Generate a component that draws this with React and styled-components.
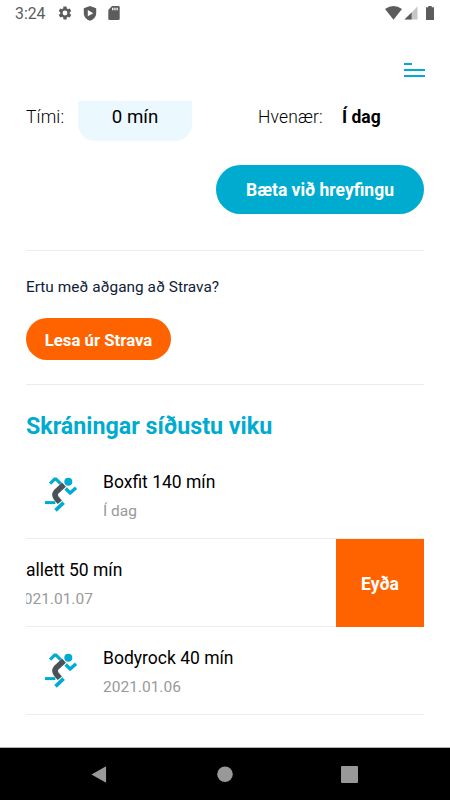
import React, { useState } from 'react';
import styled, { createGlobalStyle, ThemeProvider } from 'styled-components';

const theme = {
  blue: '#00abd0',
  lightBlue: '#ebf8fd',
  orange: '#ff6300',
  line: '#ededed',
  grey: '#999',
  navy: '#0f2137',
};

const GlobalStyle = createGlobalStyle`
  * {
    box-sizing: border-box;
  }

  body {
    margin: 0;
    background: white;
    font-family: Roboto, sans-serif;
    color: black;
  }

  button {
    border: 0;
    padding: 0;
    font-family: inherit;
    cursor: pointer;
  }
`;

const Screen = styled.div`
  display: flex;
  flex-direction: column;
  width: 450px;
  height: 800px;
  overflow: hidden;
`;

const StatusBar = styled.div`
  display: flex;
  justify-content: space-between;
  flex: none;
  height: 26px;
  padding: 0 16px 0 15px;
  color: #5c5c5c;
`;

const StatusGroup = styled.div`
  display: flex;
  align-items: center;

  svg {
    display: block;
  }
`;

const Clock = styled.span`
  width: 42px;
  padding-top: 2px;
  font-size: 15.8px;
  line-height: 24px;
`;

const Header = styled.header`
  display: flex;
  justify-content: flex-end;
  flex: none;
  height: 75px;
  padding: 37px 25px 0 0;
`;

const MenuButton = styled.button`
  display: flex;
  flex-direction: column;
  gap: 4px;
  width: 21px;
  height: 16px;
  background: none;
`;

const MenuLine = styled.span`
  width: ${props => (props.$short ? '8px' : '21px')};
  height: 2px;
  background: ${props => props.theme.blue};
`;

const Content = styled.main`
  flex: 1;
  min-height: 0;
  padding: 0 26px;
  overflow: hidden;
`;

const FormRow = styled.div`
  display: flex;
  height: 40px;
  line-height: 33px;
`;

const Label = styled.span`
  width: ${props => props.$width}px;
  font-size: 17.5px;
  font-weight: 300;
  letter-spacing: 0.15px;
`;

const TimeInput = styled.div`
  width: 114px;
  height: 40px;
  margin-right: 66px;
  border-radius: 0 0 17px 17px;
  background: ${props => props.theme.lightBlue};
  font-size: 18.7px;
  text-align: center;
`;

const DayValue = styled.span`
  font-size: 17.5px;
  font-weight: 700;
`;

const ActionRow = styled.div`
  display: flex;
  justify-content: flex-end;
  height: 110px;
  padding-top: 24px;
  border-bottom: 1px solid ${props => props.theme.line};
`;

const AddButton = styled.button`
  width: 208px;
  height: 49px;
  padding-top: 1px;
  border-radius: 25px;
  background: ${props => props.theme.blue};
  color: white;
  font-size: 17.5px;
  font-weight: 700;
`;

const StravaSection = styled.section`
  height: 134px;
  border-bottom: 1px solid ${props => props.theme.line};
`;

const Question = styled.p`
  margin: 0;
  padding-top: 24px;
  color: ${props => props.theme.navy};
  font-size: 15.4px;
  line-height: 24px;
`;

const StravaButton = styled.button`
  display: block;
  width: 145px;
  height: 42px;
  margin-top: 19px;
  padding-top: 1px;
  border-radius: 21px;
  background: ${props => props.theme.orange};
  color: white;
  font-size: 16.8px;
  font-weight: 700;
`;

const Title = styled.h2`
  margin: 0;
  padding-top: 25px;
  height: 66px;
  color: ${props => props.theme.blue};
  font-size: 23.25px;
  font-weight: 700;
  line-height: 32px;
`;

const Row = styled.li`
  display: flex;
  height: 88px;
  overflow: hidden;
  background: linear-gradient(${props => props.theme.line}, ${props => props.theme.line}) bottom / 100% 1px no-repeat;
`;

const RowBody = styled.div`
  display: flex;
  flex: none;
  width: 398px;
  margin-left: ${props => (props.$open ? '-88px' : 0)};
`;

const RowIcon = styled.div`
  width: 77px;
  padding: 25px 0 0 18px;
`;

const RowName = styled.p`
  margin: 0;
  padding-top: 18px;
  font-size: 17.5px;
  line-height: 26px;
`;

const RowDate = styled.p`
  margin: 0;
  padding-top: 4px;
  color: ${props => props.theme.grey};
  font-size: 15.5px;
  line-height: 24px;
`;

const DeleteButton = styled.button`
  flex: none;
  width: 88px;
  height: 88px;
  padding-top: 1px;
  background: ${props => props.theme.orange};
  color: white;
  font-size: 17.5px;
  font-weight: 700;
`;

const List = styled.ul`
  margin: 0;
  padding: 0;
  list-style: none;
`;

const NavBar = styled.nav`
  display: flex;
  justify-content: space-between;
  align-items: center;
  flex: none;
  height: 53px;
  padding: 0 92px 0 91px;
  border-top: 1px solid #b0b0b0;
  background: black;
`;

const Runner = () => (
  <svg width="34" height="36" viewBox="0 0 34 36" fill="none" stroke="#00abd0" strokeWidth="3.4">
    <circle cx="24.3" cy="5.7" r="4" fill="#00abd0" stroke="none" />
    <path d="M6.1 7.6 10.6 3.2H12L16.6 7.6" strokeWidth="3.2" />
    <path d="M21.6 12.6 26.2 17 32 11.8" strokeWidth="3.4" />
    <path d="M20 8.6 12.1 15.9Q9.9 18.8 12.2 22L15.8 26.2" stroke="#4b5357" strokeWidth="5.6" />
    <path d="M1 26.6H11.4" strokeWidth="3" />
    <path d="M11.5 34.4 19.6 26.6" strokeWidth="3.6" />
  </svg>
);

const entries = [
  { id: 1, name: 'Boxfit 140 mín', date: 'Í dag' },
  { id: 2, name: 'Ballett 50 mín', date: '2021.01.07' },
  { id: 3, name: 'Bodyrock 40 mín', date: '2021.01.06' },
];

const App = () => {
  const [items, setItems] = useState(entries);
  const [openId, setOpenId] = useState(2);

  const handleDelete = id => {
    setItems(items.filter(item => item.id !== id));
    setOpenId(null);
  };

  return (
    <ThemeProvider theme={theme}>
      <GlobalStyle />
      <Screen>
        <StatusBar>
          <StatusGroup>
            <Clock>3:24</Clock>
            <svg width="16" height="16" viewBox="0 0 24 24" fill="currentColor">
              <path d="M19.14 12.94c.04-.3.06-.61.06-.94 0-.32-.02-.64-.07-.94l2.03-1.58a.49.49 0 0 0 .12-.61l-1.92-3.32a.488.488 0 0 0-.59-.22l-2.39.96c-.5-.38-1.03-.7-1.62-.94l-.36-2.54a.484.484 0 0 0-.48-.41h-3.84c-.24 0-.43.17-.47.41l-.36 2.54c-.59.24-1.13.57-1.62.94l-2.39-.96c-.22-.08-.47 0-.59.22L2.74 8.87c-.12.21-.08.47.12.61l2.03 1.58c-.05.3-.09.63-.09.94s.02.64.07.94l-2.03 1.58a.49.49 0 0 0-.12.61l1.92 3.32c.12.22.37.29.59.22l2.39-.96c.5.38 1.03.7 1.62.94l.36 2.54c.05.24.24.41.48.41h3.84c.24 0 .44-.17.47-.41l.36-2.54c.59-.24 1.13-.56 1.62-.94l2.39.96c.22.08.47 0 .59-.22l1.92-3.32c.12-.22.07-.47-.12-.61l-2.01-1.58zM12 15.6A3.6 3.6 0 1 1 12 8.4a3.6 3.6 0 0 1 0 7.2z" />
            </svg>
            <svg width="14" height="15" viewBox="0 0 14 15" fill="currentColor" style={{ marginLeft: 10 }}>
              <path fillRule="evenodd" d="M7 0 13.2 2.3V7C13.2 10.8 10.6 13.7 7 14.8 3.4 13.7.8 10.8.8 7V2.3ZM4.8 4.1V10.3L10.3 7.2Z" />
            </svg>
            <svg width="12" height="14" viewBox="0 0 12 14" fill="currentColor" style={{ marginLeft: 11 }}>
              <path fillRule="evenodd" d="M4 0H10.5Q11.7 0 11.7 1.2V12.8Q11.7 14 10.5 14H1.5Q.3 14 .3 12.8V3.9ZM4.1 1.7V4.3H5.4V1.7ZM6.3 1.7V4.3H7.6V1.7ZM8.5 1.7V4.3H9.8V1.7Z" />
            </svg>
          </StatusGroup>
          <StatusGroup>
            <svg width="17" height="14" viewBox="0 0 18 14" preserveAspectRatio="none" fill="currentColor">
              <path d="M0 3Q9-2.8 18 3L9 13.8Z" />
            </svg>
            <svg width="14" height="14" viewBox="0 0 14 14" style={{ marginLeft: 2 }}>
              <path d="M.5 13.5 13.5.5V13.5Z" fill="#c6c6c6" />
              <path d="M.5 13.5 7.6 6.4V13.5Z" fill="#5c5c5c" />
            </svg>
            <svg width="8" height="14" viewBox="0 0 8 14" fill="currentColor" style={{ marginLeft: 8 }}>
              <path d="M2.3 0H5.7V1.3H8V14H0V1.3H2.3Z" />
            </svg>
          </StatusGroup>
        </StatusBar>

        <Header>
          <MenuButton type="button" aria-label="Valmynd">
            <MenuLine $short />
            <MenuLine />
            <MenuLine />
          </MenuButton>
        </Header>

        <Content>
          <FormRow>
            <Label $width={52}>Tími:</Label>
            <TimeInput>0 mín</TimeInput>
            <Label $width={84}>Hvenær:</Label>
            <DayValue>Í dag</DayValue>
          </FormRow>
          <ActionRow>
            <AddButton type="button">Bæta við hreyfingu</AddButton>
          </ActionRow>

          <StravaSection>
            <Question>Ertu með aðgang að Strava?</Question>
            <StravaButton type="button">Lesa úr Strava</StravaButton>
          </StravaSection>

          <Title>Skráningar síðustu viku</Title>
          <List>
            {items.map(item => (
              <Row key={item.id}>
                <RowBody $open={item.id === openId}>
                  <RowIcon>
                    <Runner />
                  </RowIcon>
                  <div>
                    <RowName>{item.name}</RowName>
                    <RowDate>{item.date}</RowDate>
                  </div>
                </RowBody>
                {item.id === openId ? (
                  <DeleteButton type="button" onClick={() => handleDelete(item.id)}>Eyða</DeleteButton>
                ) : ''}
              </Row>
            ))}
          </List>
        </Content>

        <NavBar>
          <svg width="16" height="17" viewBox="0 0 16 18" fill="#999">
            <path d="M0 9 15.5.2V17.8Z" />
          </svg>
          <svg width="17" height="17" viewBox="0 0 17 17" fill="#999">
            <circle cx="9" cy="8.2" r="7.8" />
          </svg>
          <svg width="17" height="17" viewBox="0 0 17 17" fill="#999">
            <rect width="17" height="17" rx="1" />
          </svg>
        </NavBar>
      </Screen>
    </ThemeProvider>
  );
};

export default App;
